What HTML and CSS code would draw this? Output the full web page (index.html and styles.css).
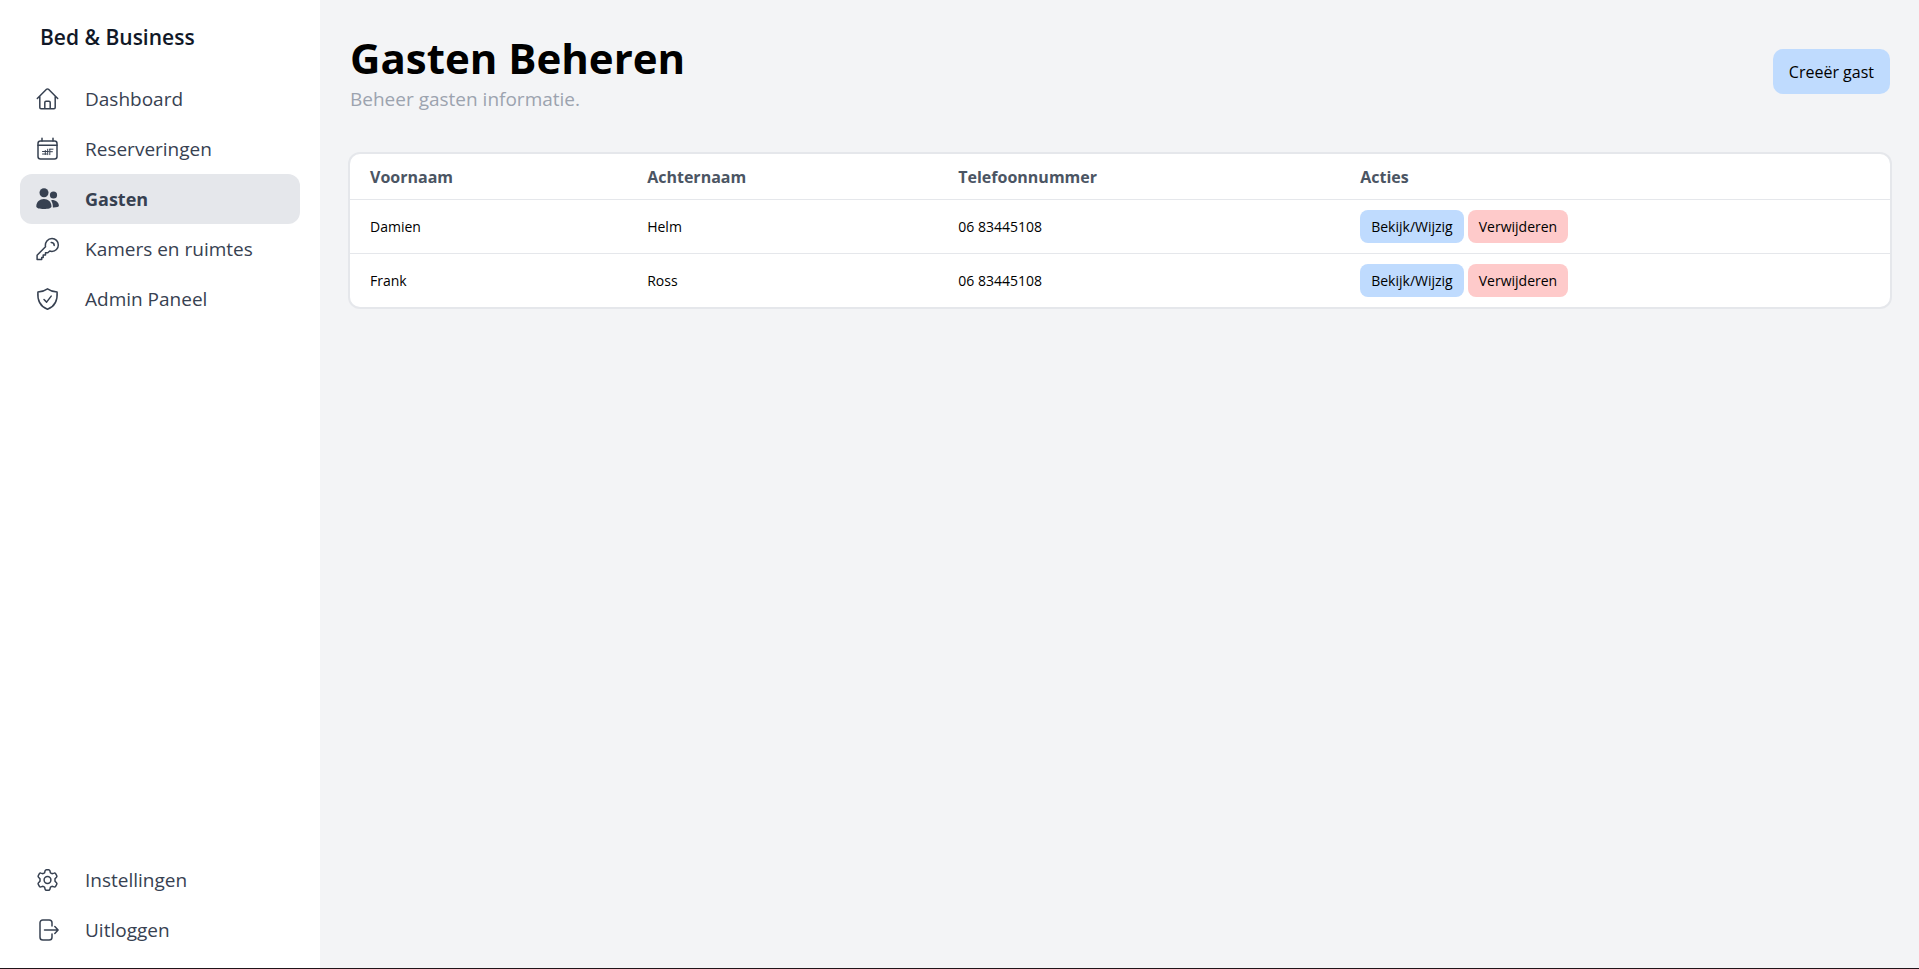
FILE: index.html
```html
<!DOCTYPE html>
<html lang="nl">
<head>
<meta charset="utf-8">
<title>Gasten Beheren</title>
<link rel="stylesheet" href="styles.css">
</head>
<body>
<div class="app">
  <aside class="sidebar">
    <h2 class="brand">Bed &amp; Business</h2>
    <nav class="nav">
      <a class="nav-link" href="#dashboard">
        <svg class="icon" viewBox="0 0 24 24" aria-hidden="true"><path d="M1.8 11.500 11 2.300a1.400 1.400 0 0 1 2 0l9.200 9.200M4.300 9.300v11.200c0 .7.5 1.200 1.200 1.200h13c.7 0 1.200-.5 1.200-1.200V9.300M9.300 21.500v-6c0-.7.5-1.200 1.200-1.200h3c.7 0 1.200.5 1.200 1.200v6"/></svg>
        <span>Dashboard</span>
      </a>
      <a class="nav-link" href="#reserveringen">
        <svg class="icon" viewBox="0 0 24 24" aria-hidden="true"><rect x="2.500" y="4" width="19" height="18" rx="2.500"/><path d="M2.500 8.200h19M6.500 1.300V4M17.500 1.300V4"/><path class="fine" d="M7 14.500h6M7 17h4M12.200 12.200v5.500M14.300 12.200v5.500M14.300 12.200h3.200M14.300 14.700h2.600M9.800 13.500v4"/></svg>
        <span>Reserveringen</span>
      </a>
      <a class="nav-link active" href="#gasten" aria-current="page">
        <svg class="icon solid" viewBox="0 0 24 24" aria-hidden="true"><circle cx="8.500" cy="5.700" r="4.500"/><circle cx="18" cy="8" r="3.600"/><path d="M.8 19.500c0-4.600 3.400-7.500 7.600-7.500s7.600 2.900 7.600 7.500c0 1.700-3.400 2.500-7.600 2.500s-7.600-.8-7.600-2.500Z"/><path d="M15.600 13.500c1-.4 1.900-.5 2.800-.3 2.900.4 5 2.900 5 5.500 0 1.200-2.400 1.800-6 1.700 0-2.700-.4-4.900-1.800-6.900Z"/></svg>
        <span>Gasten</span>
      </a>
      <a class="nav-link" href="#kamers">
        <svg class="icon" viewBox="0 0 24 24" aria-hidden="true"><path d="M16.500 1.600c3.600 0 6.300 2.700 6.300 6.300s-2.800 6.500-6.300 6.500c-.8 0-1.600-.1-2.300-.4l-1.900 1.700H10v2.400H7.700v2.400H6.200v1.900H1.600v-4.100L10 9.700c-.8-4.500 2.300-8.100 6.500-8.100Z"/><path d="M15.700 5.500c1.700 0 3 1.300 3 3"/></svg>
        <span>Kamers en ruimtes</span>
      </a>
      <a class="nav-link" href="#admin">
        <svg class="icon" viewBox="0 0 24 24" aria-hidden="true"><path d="M12 1.800c2.800 2 5.800 3 9.600 3.200.6 7.800-2 14.400-9.600 17.300C4.400 19.400 1.800 12.800 2.400 5 6.200 4.800 9.200 3.800 12 1.800Z"/><path d="m8.500 12.500 2.600 2.600 4.600-6"/></svg>
        <span>Admin Paneel</span>
      </a>
    </nav>
    <nav class="nav nav-bottom">
      <a class="nav-link" href="#instellingen">
        <svg class="icon" viewBox="0 0 24 24" aria-hidden="true"><circle cx="12" cy="12" r="3.400"/><path d="M9.600 2.700c.2-.6.700-1 1.300-1h2.200c.6 0 1.100.4 1.300 1l.5 2.100 1.600.9 2.100-.6c.6-.2 1.200.1 1.500.6l1.100 1.900c.3.5.2 1.200-.2 1.600L19.500 10.700v2.600l1.500 1.500c.4.4.5 1.100.2 1.600l-1.100 1.900c-.3.5-.9.800-1.500.6l-2.100-.6-1.600.9-.5 2.100c-.2.6-.7 1-1.300 1h-2.200c-.6 0-1.100-.4-1.300-1l-.5-2.100-1.600-.9-2.100.6c-.6.2-1.200-.1-1.500-.6l-1.100-1.900c-.3-.5-.2-1.200.2-1.600l1.500-1.500v-2.600L3 9.200c-.4-.4-.5-1.100-.2-1.600l1.100-1.900c.3-.5.9-.8 1.500-.6l2.100.6 1.600-.9Z"/></svg>
        <span>Instellingen</span>
      </a>
      <a class="nav-link" href="#uitloggen">
        <svg class="icon" viewBox="0 0 24 24" aria-hidden="true"><path d="M16.500 8V4.800c0-1.600-1.200-2.800-2.800-2.800H7.300C5.700 2 4.500 3.200 4.500 4.800v14.400c0 1.600 1.200 2.800 2.800 2.800h6.400c1.600 0 2.800-1.200 2.800-2.800V16M9 12h13.300M19.300 8.500l3.300 3.500-3.300 3.500"/></svg>
        <span>Uitloggen</span>
      </a>
    </nav>
  </aside>
  <main class="main">
    <header class="page-header">
      <div>
        <h1 class="title">Gasten Beheren</h1>
        <p class="subtitle">Beheer gasten informatie.</p>
      </div>
      <button class="btn btn-create" type="button">Creeër gast</button>
    </header>
    <div class="card">
      <table class="table">
        <thead>
          <tr><th class="col-first">Voornaam</th><th class="col-last">Achternaam</th><th class="col-phone">Telefoonnummer</th><th>Acties</th></tr>
        </thead>
        <tbody>
          <tr>
            <td>Damien</td><td>Helm</td><td>06 83445108</td>
            <td><div class="actions"><button class="btn btn-small" type="button">Bekijk/Wijzig</button><button class="btn btn-small btn-danger" type="button">Verwijderen</button></div></td>
          </tr>
          <tr>
            <td>Frank</td><td>Ross</td><td>06 83445108</td>
            <td><div class="actions"><button class="btn btn-small" type="button">Bekijk/Wijzig</button><button class="btn btn-small btn-danger" type="button">Verwijderen</button></div></td>
          </tr>
        </tbody>
      </table>
    </div>
  </main>
</div>
</body>
</html>
```
FILE: styles.css
```css
* { box-sizing: border-box; margin: 0; padding: 0; }

body {
  font-family: "Segoe UI", "Open Sans", "Noto Sans", sans-serif;
  background: #f3f4f6;
  color: #000;
}

.app {
  display: flex;
  min-height: 100vh;
  border-bottom: 1px solid #201419;
}

.sidebar {
  display: flex;
  flex-direction: column;
  flex: 0 0 320px;
  padding: 20px 20px 13px;
  background: #fff;
}

.brand {
  padding: 0 20px;
  font-size: 21px;
  line-height: 34px;
  font-weight: 600;
  color: #111827;
}

.nav { margin-top: 20px; }
.nav-bottom { margin-top: auto; }

.nav-link {
  display: flex;
  align-items: center;
  gap: 25px;
  height: 50px;
  padding: 0 15px;
  border-radius: 12px;
  font-size: 19px;
  color: #374151;
  text-decoration: none;
}

.nav-link.active {
  background: #e5e7eb;
  font-size: 18px;
  font-weight: 700;
}

.icon {
  width: 25px;
  height: 24px;
  fill: none;
  stroke: currentColor;
  stroke-width: 1.5;
  stroke-linecap: round;
  stroke-linejoin: round;
}

.icon.solid { fill: currentColor; stroke: none; }
.icon .fine { stroke-width: 1; }

.main { flex: 1; padding: 30px 29px 30px 30px; }

.page-header {
  display: flex;
  align-items: center;
  justify-content: space-between;
  margin-bottom: 41px;
}

.title {
  font-size: 42px;
  line-height: 55px;
  font-weight: 700;
}

.subtitle {
  font-size: 19px;
  line-height: 28px;
  color: #9ca3af;
}

.btn {
  border: 0;
  font-family: inherit;
  color: #000;
  background: #bfdbfe;
}

.btn-create {
  padding: 11px 16px 9px;
  border-radius: 10px;
  font-size: 16px;
  line-height: 25px;
}

.btn-small {
  padding: 6px 11px;
  border-radius: 8px;
  font-size: 14px;
  line-height: 21px;
}

.btn-danger { background: #fecaca; }

.card {
  overflow: hidden;
  background: #fff;
  border-radius: 10px;
  box-shadow: 0 0 0 2px #e5e7eb;
}

.table { width: 100%; border-collapse: collapse; text-align: left; }

.table th {
  height: 45px;
  padding: 2px 20px 0;
  font-size: 16px;
  font-weight: 700;
  color: #4b5563;
}

.table td {
  height: 54px;
  padding: 0 20px;
  font-size: 14px;
  border-top: 1px solid #e5e7eb;
}

.col-first { width: 18%; }
.col-last { width: 20.2%; }
.col-phone { width: 26.1%; }

.actions { display: flex; gap: 4px; }
```
